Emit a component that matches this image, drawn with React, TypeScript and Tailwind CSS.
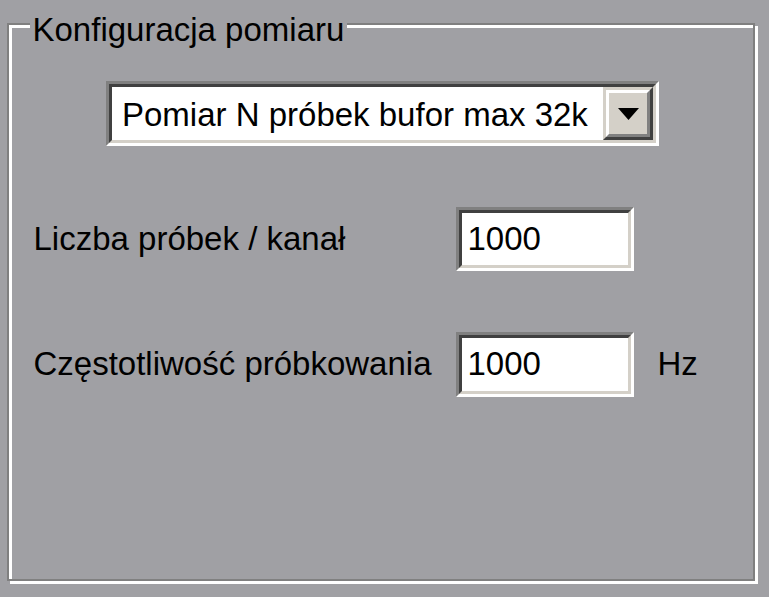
import React from 'react';

// Classic Win32 sunken field: outer #808080/#fff, inner #404040/#d4d0c8
function Sunken({ className, children }: { className: string; children: React.ReactNode }) {
  return (
    <div
      className={`border-[3px] border-t-[#808080] border-l-[#808080] border-b-white border-r-white ${className}`}
    >
      <div className="h-full w-full border-[3px] border-t-[#404040] border-l-[#404040] border-b-[#d4d0c8] border-r-[#d4d0c8] bg-white flex">
        {children}
      </div>
    </div>
  );
}

function DropButton() {
  return (
    <div className="w-[50px] h-full border-[3px] border-t-[#d4d0c8] border-l-[#d4d0c8] border-b-[#404040] border-r-[#404040]">
      <div className="h-full w-full border-[3px] border-t-white border-l-white border-b-[#808080] border-r-[#808080] bg-[#d4d0c8] flex items-center justify-center">
        <svg width="21" height="12" viewBox="0 0 21 12" className="mt-[2px]">
          <polygon points="0,0 21,0 10.5,12" fill="#000" />
        </svg>
      </div>
    </div>
  );
}

export default function App() {
  return (
    <div
      className="w-[769px] h-[597px] bg-[#a0a0a4] pl-[7px] pt-[23px] text-black text-[33px] leading-[38px]"
      style={{ fontFamily: '"Liberation Sans", Arial, sans-serif' }}
    >
      {/* Group box */}
      <div className="relative w-[748px] h-[558px] border-[2.5px] border-[#808080] shadow-[inset_3px_3px_0_#fff,3px_3px_0_#fff] flex flex-col">
        <div className="absolute left-[20.5px] top-[-14.5px] px-[3px] bg-[#a0a0a4] whitespace-nowrap">
          Konfiguracja pomiaru
        </div>

        {/* Combo */}
        <div className="flex justify-center pl-[3px] pt-[55.5px]">
          <Sunken className="w-[553px] h-[65px]">
            <div className="flex-1 pl-[10px] pt-[9px] whitespace-nowrap">Pomiar N próbek bufor max 32k</div>
            <DropButton />
          </Sunken>
        </div>

        {/* Fields */}
        <div className="pl-[24.5px] mt-[61px] flex flex-col gap-[61px]">
          <div className="grid grid-cols-[422px_178px_auto] items-center h-[64px]">
            <span className="whitespace-nowrap">Liczba próbek / kanał</span>
            <Sunken className="w-[178px] h-[64px]">
              <span className="pl-[6px] self-center">1000</span>
            </Sunken>
            <span />
          </div>
          <div className="grid grid-cols-[422px_178px_auto] items-center h-[65px]">
            <span className="whitespace-nowrap">Częstotliwość próbkowania</span>
            <Sunken className="w-[178px] h-[65px]">
              <span className="pl-[6px] self-center">1000</span>
            </Sunken>
            <span className="pl-[24px]">Hz</span>
          </div>
        </div>
      </div>
    </div>
  );
}
